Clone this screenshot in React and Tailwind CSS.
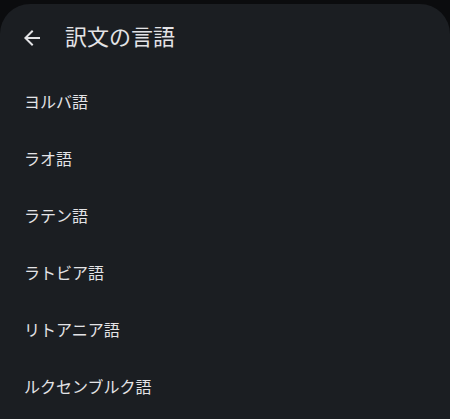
import React from 'react';

const languages = ['ヨルバ語', 'ラオ語', 'ラテン語', 'ラトビア語', 'リトアニア語', 'ルクセンブルク語'];

export default function App() {
  return (
    <div
      className="w-[450px] h-[419px] bg-[#0b0c0e] pt-[4px] overflow-hidden"
      style={{ fontFamily: 'Roboto, "Noto Sans CJK JP", sans-serif' }}
    >
      <div className="h-full bg-[#1b1e22] rounded-t-[30px] text-[#e3e3e6]">
        <div className="h-[68px] pb-[1px] flex items-center pl-5">
          <svg width="24" height="24" viewBox="0 0 24 24" fill="#e3e3e6">
            <path d="M20 11H7.83l5.59-5.59L12 4l-8 8 8 8 1.41-1.41L7.83 13H20v-2z" />
          </svg>
          <h1 className="ml-[21px] text-[22px] leading-none">訳文の言語</h1>
        </div>
        <ul className="pt-[2px]">
          {languages.map((lang) => (
            <li key={lang} className="h-[57px] flex items-center px-6 text-[16px]">
              {lang}
            </li>
          ))}
        </ul>
      </div>
    </div>
  );
}
